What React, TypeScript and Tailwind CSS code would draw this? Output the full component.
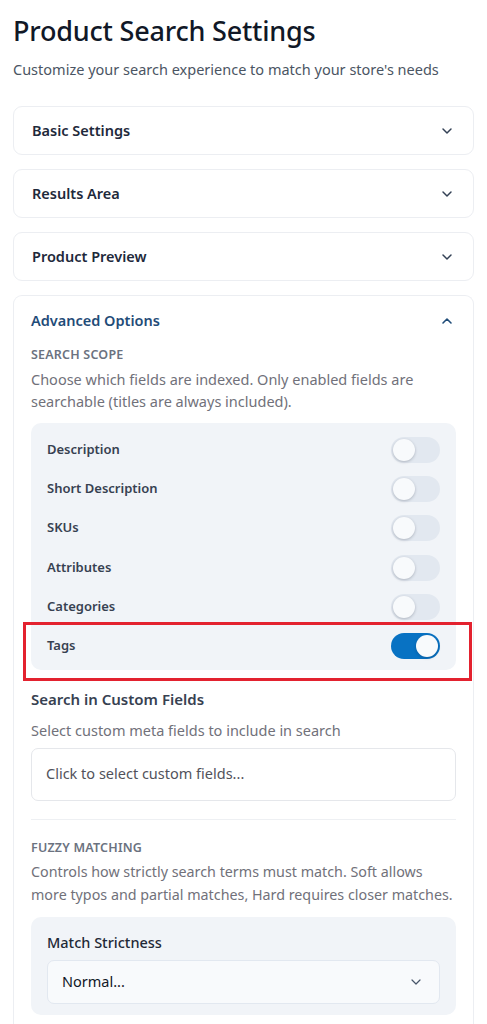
import React from 'react';
import { ChevronDown, ChevronUp } from 'lucide-react';

const scopeFields = [
  { label: 'Description', enabled: false },
  { label: 'Short Description', enabled: false },
  { label: 'SKUs', enabled: false },
  { label: 'Attributes', enabled: false },
  { label: 'Categories', enabled: false },
  { label: 'Tags', enabled: true },
];

const Toggle = ({ on }: { on: boolean }) => (
  <div
    className={`w-[49px] h-[26px] rounded-full p-[2px] flex items-center ${
      on ? 'bg-[#0872c3] justify-end' : 'bg-[#e2e8f0] justify-start'
    }`}
  >
    <div className="w-[22px] h-[22px] rounded-full bg-[#f8fafc] shadow-[0_1px_3px_rgba(15,23,42,0.25)]" />
  </div>
);

const CollapsedCard = ({ title }: { title: string }) => (
  <div className="h-[49px] rounded-[9px] border border-[#eceef2] bg-white flex items-center justify-between pl-[18px] pr-[18px]">
    <span className="text-[14.5px] font-semibold text-[#1e293b]">{title}</span>
    <ChevronDown className="h-4 w-4 text-[#334155]" strokeWidth={2.2} />
  </div>
);

export default function App() {
  return (
    <div
      className="min-h-screen bg-white px-[13px] pt-[14px] text-[#1f2937]"
      style={{ fontFamily: '"Noto Sans", "Open Sans", sans-serif' }}
    >
      <h1 className="text-[27px] leading-[34px] font-medium text-[#111827] tracking-[-0.2px]">
        Product Search Settings
      </h1>
      <p className="mt-[11px] text-[14.5px] leading-[20px] text-[#4b5563]">
        Customize your search experience to match your store's needs
      </p>

      <div className="mt-[27px] flex flex-col gap-[14px]">
        <CollapsedCard title="Basic Settings" />
        <CollapsedCard title="Results Area" />
        <CollapsedCard title="Product Preview" />

        <div className="rounded-t-[9px] border border-b-0 border-[#eceef2] bg-white px-[17px] pb-[10px]">
          <div className="h-[49px] flex items-center justify-between">
            <span className="text-[14.5px] font-semibold text-[#1f4c78]">Advanced Options</span>
            <ChevronUp className="h-4 w-4 text-[#1f4c78] mr-[1px]" strokeWidth={2.4} />
          </div>

          <div className="text-[12.5px] font-semibold uppercase tracking-[0.2px] text-[#6b7280] leading-[16px] mt-[2px]">
            Search Scope
          </div>
          <p className="mt-[6px] text-[14.5px] leading-[21.5px] text-[#71717a]">
            Choose which fields are indexed. Only enabled fields are searchable (titles are always included).
          </p>

          <div className="mt-[11px] rounded-[10px] bg-[#f1f4f8] px-[16px] pt-[7px] pb-[4px]">
            {scopeFields.map((field) => (
              <div key={field.label} className="relative h-[39.3px] flex items-center justify-between">
                <span className="text-[13px] font-semibold text-[#374151]">{field.label}</span>
                <Toggle on={field.enabled} />
                {field.enabled && (
                  <div className="absolute left-[-24px] right-[-32px] top-[-4px] bottom-[-15px] border-[3px] border-[#e3222f] pointer-events-none" />
                )}
              </div>
            ))}
          </div>

          <div className="mt-[18px] text-[15px] leading-[22px] font-semibold text-[#374151]">
            Search in Custom Fields
          </div>
          <p className="mt-[10px] text-[14.5px] leading-[20px] text-[#71717a]">
            Select custom meta fields to include in search
          </p>
          <div className="mt-[8px] h-[53px] rounded-[7px] border border-[#e5e7eb] bg-white flex items-center px-[14px]">
            <span className="text-[14.5px] text-[#52525b]">Click to select custom fields...</span>
          </div>

          <div className="mt-[18px] border-t border-[#eef0f3]" />

          <div className="mt-[20px] text-[12.5px] font-semibold uppercase tracking-[0.2px] text-[#6b7280] leading-[16px]">
            Fuzzy Matching
          </div>
          <p className="mt-[4px] text-[14.3px] leading-[23px] text-[#71717a] whitespace-nowrap">
            Controls how strictly search terms must match. Soft allows
            <br />
            more typos and partial matches, Hard requires closer matches.
          </p>

          <div className="mt-[11px] rounded-[10px] bg-[#f1f4f8] px-[16px] pt-[14px] pb-[11px]">
            <div className="text-[14.5px] leading-[22px] font-medium text-[#1f2937]">Match Strictness</div>
            <div className="mt-[7px] h-[44px] rounded-[7px] border border-[#e2e8f0] bg-[#f8fafc] flex items-center justify-between pl-[14px] pr-[15px]">
              <span className="text-[14.5px] text-[#111827]">Normal...</span>
              <ChevronDown className="h-4 w-4 text-[#475569]" strokeWidth={1.8} />
            </div>
          </div>
        </div>
      </div>
    </div>
  );
}
